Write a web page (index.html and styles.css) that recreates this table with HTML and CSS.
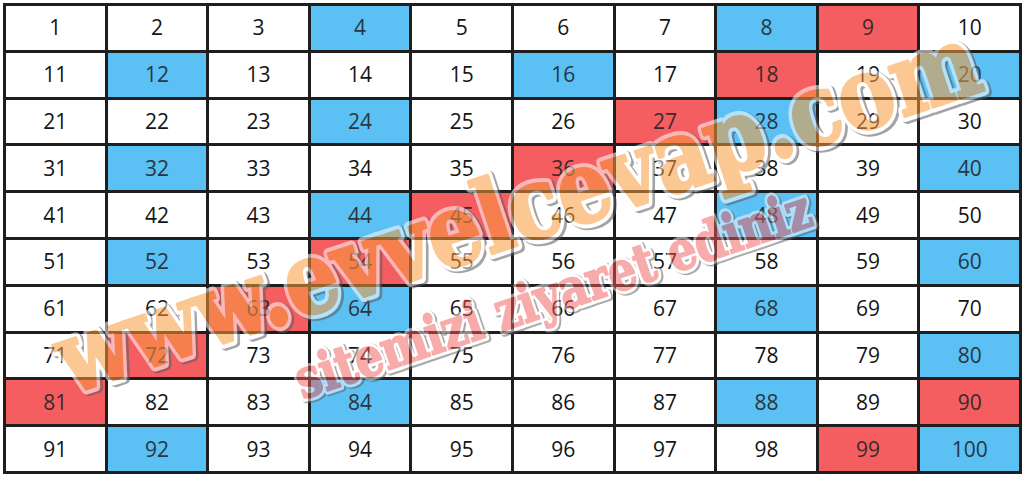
FILE: index.html
```
<!DOCTYPE html>
<html lang="tr">
<head>
<meta charset="utf-8">
<title>1-100</title>
<link rel="stylesheet" href="styles.css">
</head>
<body>
<div class="page">
  <div class="board">
    <div class="cell">1</div><div class="cell">2</div><div class="cell">3</div><div class="cell b">4</div><div class="cell">5</div><div class="cell">6</div><div class="cell">7</div><div class="cell b">8</div><div class="cell r">9</div><div class="cell">10</div>
    <div class="cell">11</div><div class="cell b">12</div><div class="cell">13</div><div class="cell">14</div><div class="cell">15</div><div class="cell b">16</div><div class="cell">17</div><div class="cell r">18</div><div class="cell">19</div><div class="cell b">20</div>
    <div class="cell">21</div><div class="cell">22</div><div class="cell">23</div><div class="cell b">24</div><div class="cell">25</div><div class="cell">26</div><div class="cell r">27</div><div class="cell b">28</div><div class="cell">29</div><div class="cell">30</div>
    <div class="cell">31</div><div class="cell b">32</div><div class="cell">33</div><div class="cell">34</div><div class="cell">35</div><div class="cell r">36</div><div class="cell">37</div><div class="cell">38</div><div class="cell">39</div><div class="cell b">40</div>
    <div class="cell">41</div><div class="cell">42</div><div class="cell">43</div><div class="cell b">44</div><div class="cell r">45</div><div class="cell">46</div><div class="cell">47</div><div class="cell b">48</div><div class="cell">49</div><div class="cell">50</div>
    <div class="cell">51</div><div class="cell b">52</div><div class="cell">53</div><div class="cell r">54</div><div class="cell">55</div><div class="cell">56</div><div class="cell">57</div><div class="cell">58</div><div class="cell">59</div><div class="cell b">60</div>
    <div class="cell">61</div><div class="cell">62</div><div class="cell r">63</div><div class="cell b">64</div><div class="cell">65</div><div class="cell">66</div><div class="cell">67</div><div class="cell b">68</div><div class="cell">69</div><div class="cell">70</div>
    <div class="cell">71</div><div class="cell r">72</div><div class="cell">73</div><div class="cell">74</div><div class="cell">75</div><div class="cell">76</div><div class="cell">77</div><div class="cell">78</div><div class="cell">79</div><div class="cell b">80</div>
    <div class="cell r">81</div><div class="cell">82</div><div class="cell">83</div><div class="cell b">84</div><div class="cell">85</div><div class="cell">86</div><div class="cell">87</div><div class="cell b">88</div><div class="cell">89</div><div class="cell r">90</div>
    <div class="cell">91</div><div class="cell b">92</div><div class="cell">93</div><div class="cell">94</div><div class="cell">95</div><div class="cell">96</div><div class="cell">97</div><div class="cell">98</div><div class="cell r">99</div><div class="cell b">100</div>
  </div>
  <svg class="watermark" width="1025" height="478" viewBox="0 0 1025 478" aria-hidden="true">
    <g class="wm-big" transform="translate(528 242) rotate(-18.4) scale(0.84 1)">
      <text class="wm-shadow" x="2" y="2" text-anchor="middle">www.evvelcevap.com</text>
      <text class="wm-outline" x="0" y="0" text-anchor="middle">www.evvelcevap.com</text>
      <text class="wm-fill-big" x="0" y="0" text-anchor="middle">www.evvelcevap.com</text>
    </g>
    <g class="wm-small" transform="translate(559 312) rotate(-18.8) scale(0.815 1)">
      <text class="wm-shadow-s" x="1.5" y="1.5" text-anchor="middle">sitemizi ziyaret ediniz</text>
      <text class="wm-outline-s" x="0" y="0" text-anchor="middle">sitemizi ziyaret ediniz</text>
      <text class="wm-fill-small" x="0" y="0" text-anchor="middle">sitemizi ziyaret ediniz</text>
    </g>
  </svg>
</div>
</body>
</html>
```

FILE: styles.css
```
html, body {
  margin: 0;
  padding: 0;
  background: #ffffff;
}

.page {
  position: relative;
  width: 1025px;
  height: 478px;
  overflow: hidden;
}

.board {
  box-sizing: border-box;
  width: 1019px;
  height: 471px;
  margin: 3px 0 0 3px;
  padding: 3px;
  display: grid;
  grid-template-columns: repeat(10, 1fr);
  grid-template-rows: repeat(10, 1fr);
  gap: 3px;
  background: #1e1e1e;
}

.cell {
  display: flex;
  align-items: center;
  justify-content: center;
  background: #ffffff;
  color: #141414;
  font-family: "Open Sans", "Noto Sans", "DejaVu Sans", sans-serif;
  font-size: 21px;
  font-weight: 400;
  line-height: 1;
}

.cell.b {
  background: #5bc0f4;
  color: #2a3540;
}

.cell.r {
  background: #f45e61;
  color: #3a2a2c;
}

.watermark {
  position: absolute;
  top: 0;
  left: 0;
  pointer-events: none;
}

.wm-big text {
  font-family: "DejaVu Serif", serif;
  font-weight: 700;
  font-size: 100px;
  stroke-linejoin: round;
}

.wm-small text {
  font-family: "DejaVu Serif", serif;
  font-weight: 700;
  font-size: 54px;
  stroke-linejoin: round;
}

.wm-big {
  opacity: 0.55;
}

.wm-small {
  opacity: 0.5;
}

.wm-shadow {
  fill: #5a5a5a;
  stroke: #5a5a5a;
  stroke-width: 12px;
}

.wm-shadow-s {
  fill: #5a5a5a;
  stroke: #5a5a5a;
  stroke-width: 9px;
}

.wm-outline {
  fill: #ffffff;
  stroke: #ffffff;
  stroke-width: 11px;
}

.wm-outline-s {
  fill: #ffffff;
  stroke: #ffffff;
  stroke-width: 8px;
}

.wm-fill-big {
  fill: #f99c3e;
  stroke: #f99c3e;
  stroke-width: 3px;
}

.wm-fill-small {
  fill: #f05a5a;
  stroke: #f05a5a;
  stroke-width: 2px;
}
```
